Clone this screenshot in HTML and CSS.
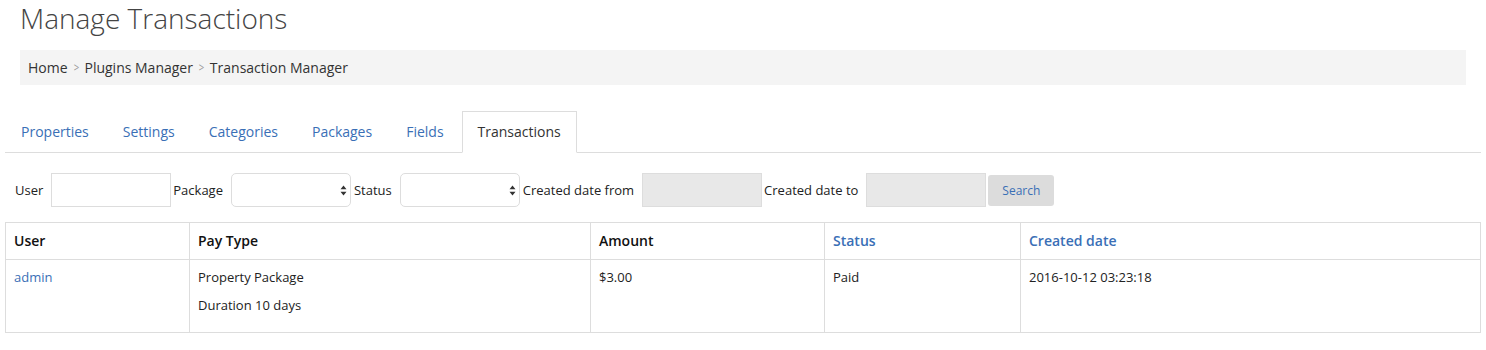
FILE: index.html
```html
<!DOCTYPE html>
<html>
<head>
<meta charset="utf-8">
<link rel="stylesheet" href="styles.css">
</head>
<body>
<div class="page-head">
  <h1 class="title">Manage Transactions</h1>
  <div class="breadcrumb">
    <span class="crumb">Home</span><span class="sep">&gt;</span><span class="crumb">Plugins Manager</span><span class="sep">&gt;</span><span class="crumb">Transaction Manager</span>
  </div>
</div>
<div class="content">
  <ul class="tabs">
    <li class="tab"><a>Properties</a></li>
    <li class="tab"><a>Settings</a></li>
    <li class="tab"><a>Categories</a></li>
    <li class="tab"><a>Packages</a></li>
    <li class="tab"><a>Fields</a></li>
    <li class="tab active"><a>Transactions</a></li>
  </ul>
  <form class="filters">
    <label class="lbl">User</label>
    <input class="field text" type="text">
    <label class="lbl">Package</label>
    <span class="select-wrap">
      <select class="field select"><option></option></select>
      <svg class="arrows" width="7" height="11" viewBox="0 0 7 11"><path d="M3.5 0.5 L6.5 4.3 L0.5 4.3 Z M3.5 10.5 L6.5 6.7 L0.5 6.7 Z" fill="#333"/></svg>
    </span>
    <label class="lbl">Status</label>
    <span class="select-wrap">
      <select class="field select"><option></option></select>
      <svg class="arrows" width="7" height="11" viewBox="0 0 7 11"><path d="M3.5 0.5 L6.5 4.3 L0.5 4.3 Z M3.5 10.5 L6.5 6.7 L0.5 6.7 Z" fill="#333"/></svg>
    </span>
    <label class="lbl">Created date from</label>
    <input class="field date" type="text" disabled>
    <label class="lbl">Created date to</label>
    <input class="field date" type="text" disabled>
    <button class="btn" type="button">Search</button>
  </form>
  <table class="grid">
    <colgroup>
      <col class="c-user"><col class="c-pay"><col class="c-amount"><col class="c-status"><col>
    </colgroup>
    <thead>
      <tr>
        <th>User</th>
        <th>Pay Type</th>
        <th>Amount</th>
        <th class="sortable">Status</th>
        <th class="sortable">Created date</th>
      </tr>
    </thead>
    <tbody>
      <tr>
        <td><a class="link">admin</a></td>
        <td><p class="line">Property Package</p><p class="line">Duration 10 days</p></td>
        <td>$3.00</td>
        <td>Paid</td>
        <td>2016-10-12 03:23:18</td>
      </tr>
    </tbody>
  </table>
</div>
</body>
</html>
```

FILE: styles.css
```css
* { box-sizing: border-box; }
body {
  margin: 0;
  font-family: "Open Sans", "Liberation Sans", sans-serif;
  font-size: 14px;
  line-height: 20px;
  color: #222;
  background: #fff;
}
.page-head {
  padding: 1px 20px 0;
}
.title {
  margin: 0;
  font-size: 28px;
  font-weight: 300;
  line-height: 34px;
  color: #444;
}
.breadcrumb {
  margin-top: 15px;
  background: #f4f4f4;
  padding: 8px 8px 7px;
  color: #333;
  display: flex;
  align-items: center;
}
.sep {
  color: #999;
  font-size: 12px;
  margin: 0 5px;
  transform: scaleX(0.8);
}
.content {
  padding: 26px 5px 0;
}
.tabs {
  list-style: none;
  margin: 0;
  padding: 0;
  display: flex;
  border-bottom: 1px solid #ddd;
}
.tab {
  margin-right: 2px;
  margin-bottom: -1px;
}
.tab a {
  display: block;
  padding: 10px 15px;
  border: 1px solid transparent;
  color: #3a6fb6;
}
.tab.active a {
  border-color: #ddd;
  border-bottom-color: #fff;
  background: #fff;
  color: #333;
}
.filters {
  display: flex;
  align-items: center;
  margin: 20px 0 15px;
  padding-left: 10px;
  font-size: 13px;
}
.lbl {
  margin-right: 8px;
  color: #222;
}
.field {
  height: 34px;
  border: 1px solid #ddd;
  margin-right: 2px;
  font-family: inherit;
  font-size: 13px;
  background: #fff;
}
.text { width: 120px; }
.select-wrap {
  position: relative;
  display: block;
  margin-right: 3px;
}
.select {
  -webkit-appearance: none;
  appearance: none;
  width: 120px;
  border-radius: 5px;
  margin-right: 0;
}
.arrows {
  position: absolute;
  right: 4px;
  top: 12px;
}
.date {
  width: 120px;
  background: #e8e8e8;
  margin-right: 2px;
}
.btn {
  height: 31px;
  width: 66px;
  border: none;
  border-radius: 3px;
  background: #dcdcdc;
  color: #3a6fb6;
  font-family: inherit;
  font-size: 12px;
  padding: 0;
  margin-top: 1px;
}
.grid {
  width: 1476px;
  border-collapse: collapse;
  table-layout: fixed;
  border: 1px solid #ddd;
}
.c-user { width: 184px; }
.c-pay { width: 401px; }
.c-amount { width: 234px; }
.c-status { width: 196px; }
.grid th, .grid td {
  border: 1px solid #ddd;
  padding: 8px;
  text-align: left;
  vertical-align: top;
}
.grid th {
  font-weight: 600;
  font-size: 14px;
  color: #111;
}
.grid th.sortable { color: #3a6fb6; }
.grid td {
  color: #222;
  font-size: 13px;
  line-height: 18.5px;
  padding-top: 8px;
  padding-bottom: 9px;
}
.link { color: #3a6fb6; }
.line { margin: 0 0 9px; }
```
